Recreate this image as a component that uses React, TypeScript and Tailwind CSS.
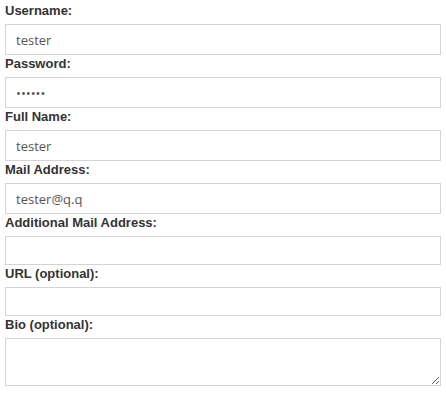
import React from "react";

const fields = [
  { label: "Username:", value: "tester", type: "text" },
  { label: "Password:", value: "tester", type: "password" },
  { label: "Full Name:", value: "tester", type: "text" },
  { label: "Mail Address:", value: "tester@q.q", type: "text" },
  { label: "Additional Mail Address:", value: "", type: "text" },
  { label: "URL (optional):", value: "", type: "text" },
];

export default function App() {
  return (
    <div className="w-[446px] h-[394px] bg-white px-[5px] pt-[2px] font-['Liberation_Sans',Arial,sans-serif]">
      {fields.map((f) => (
        <Field key={f.label} {...f} />
      ))}
      <label className="block text-[13px] leading-[18px] font-bold text-[#333]">
        Bio (optional):
      </label>
      <textarea
        readOnly
        className="block mt-[4px] w-full h-[48px] border border-[#d3d3db] bg-white outline-none"
      />
    </div>
  );
}

function Field({ label = "", value = "", type = "text" }) {
  return (
    <div>
      <label className="block text-[13px] leading-[18px] font-bold text-[#333]">
        {label}
      </label>
      <input
        readOnly
        type={type}
        defaultValue={value}
        className={
          (value ? "h-[31px] " : "h-[29px] ") +
          "block mt-[4px] w-full px-[10px] border border-[#d3d3db] bg-white text-[13px] text-[#555] font-['Open_Sans',sans-serif] outline-none"
        }
      />
    </div>
  );
}
